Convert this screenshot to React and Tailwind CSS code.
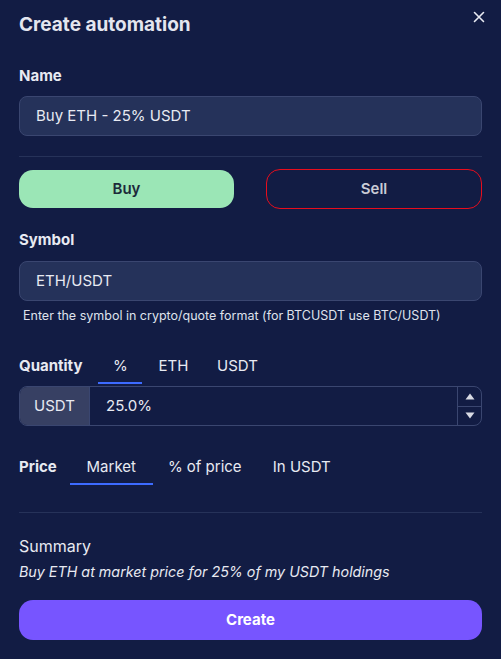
import React from 'react';

const font = { fontFamily: 'Inter, "Noto Sans", sans-serif' };

function Tab({ label, active, className }) {
  return (
    <div className={"flex flex-col items-center " + className}>
      <span className="text-[15px] leading-[20px] text-[#e8eaf2] whitespace-nowrap">{label}</span>
      <div className={"mt-[6px] h-[2px] w-full " + (active ? "bg-[#3d6bff]" : "bg-transparent")}></div>
    </div>
  );
}

export default function App() {
  return (
    <div className="w-[501px] h-[659px] bg-[#121c44] text-[#e8eaf2] px-[19px] overflow-hidden relative" style={font}>
      <button className="absolute right-[14px] top-[9px] text-[#e8eaf2]">
        <svg width="16" height="16" viewBox="0 0 16 16" fill="none" stroke="currentColor" strokeWidth="1.6" strokeLinecap="round">
          <path d="M3.5 3.5l9 9M12.5 3.5l-9 9" />
        </svg>
      </button>

      <h1 className="pt-[12px] text-[19px] leading-[26px] font-bold text-[#e4e6ef]">Create automation</h1>

      <div className="mt-[28px] text-[15px] leading-[20px] font-bold">Name</div>
      <div className="mt-[10px] h-[40px] rounded-[8px] bg-[#25325a] border border-[#3a4670] flex items-center px-[16px] text-[15px]">
        Buy ETH - 25% USDT
      </div>

      <div className="mt-[20px] h-px bg-[#263259]"></div>

      <div className="mt-[12px] flex justify-between items-center">
        <button className="w-[215px] h-[38px] rounded-[14px] bg-[#9be6b6] text-[#1d2a3a] text-[15px] font-semibold">Buy</button>
        <button className="w-[216px] h-[40px] rounded-[14px] border border-[#e80d1d] text-[#c9cbd6] text-[15px] font-semibold">Sell</button>
      </div>

      <div className="mt-[21px] text-[15px] leading-[20px] font-bold">Symbol</div>
      <div className="mt-[11px] h-[40px] rounded-[8px] bg-[#25325a] border border-[#3a4670] flex items-center px-[16px] text-[15px]">
        ETH/USDT
      </div>
      <div className="mt-[6px] pl-[4px] text-[12.5px] leading-[18px] text-[#dfe2ec]">
        Enter the symbol in crypto/quote format (for BTCUSDT use BTC/USDT)
      </div>

      <div className="mt-[31px] flex items-start">
        <span className="text-[15px] leading-[20px] font-bold">Quantity</span>
        <Tab label="%" active className="ml-[16px] w-[44px]" />
        <Tab label="ETH" className="ml-[15px] w-[32px]" />
        <Tab label="USDT" className="ml-[28px] w-[40px]" />
      </div>
      <div className="mt-[2px] h-[40px] flex rounded-[8px] border border-[#3a4670] overflow-hidden">
        <div className="w-[70px] bg-[#374063] flex items-center justify-center text-[15px] border-r border-[#3a4670]">USDT</div>
        <div className="flex-1 flex items-center px-[16px] text-[15px]">25.0%</div>
        <div className="w-[24px] border-l border-[#3a4670] flex flex-col">
          <div className="flex-1 flex items-center justify-center border-b border-[#3a4670]">
            <svg width="10" height="7" viewBox="0 0 10 7"><path d="M5 0.5L9.5 6.5H0.5Z" fill="#d8dae4" /></svg>
          </div>
          <div className="flex-1 flex items-center justify-center">
            <svg width="10" height="7" viewBox="0 0 10 7"><path d="M5 6.5L9.5 0.5H0.5Z" fill="#d8dae4" /></svg>
          </div>
        </div>
      </div>

      <div className="mt-[31px] flex items-start">
        <span className="text-[15px] leading-[20px] font-bold">Price</span>
        <Tab label="Market" active className="ml-[13px] w-[83px]" />
        <Tab label="% of price" className="ml-[15px] w-[74px]" />
        <Tab label="In USDT" className="ml-[32px] w-[56px]" />
      </div>

      <div className="mt-[27px] h-px bg-[#263259]"></div>

      <div className="mt-[22px] text-[16px] leading-[22px]">Summary</div>
      <div className="mt-[5px] text-[14.3px] leading-[20px] italic">Buy ETH at market price for 25% of my USDT holdings</div>

      <button className="mt-[18px] w-full h-[40px] rounded-[14px] bg-[#7755ff] text-white text-[15px] font-bold">Create</button>
    </div>
  );
}
